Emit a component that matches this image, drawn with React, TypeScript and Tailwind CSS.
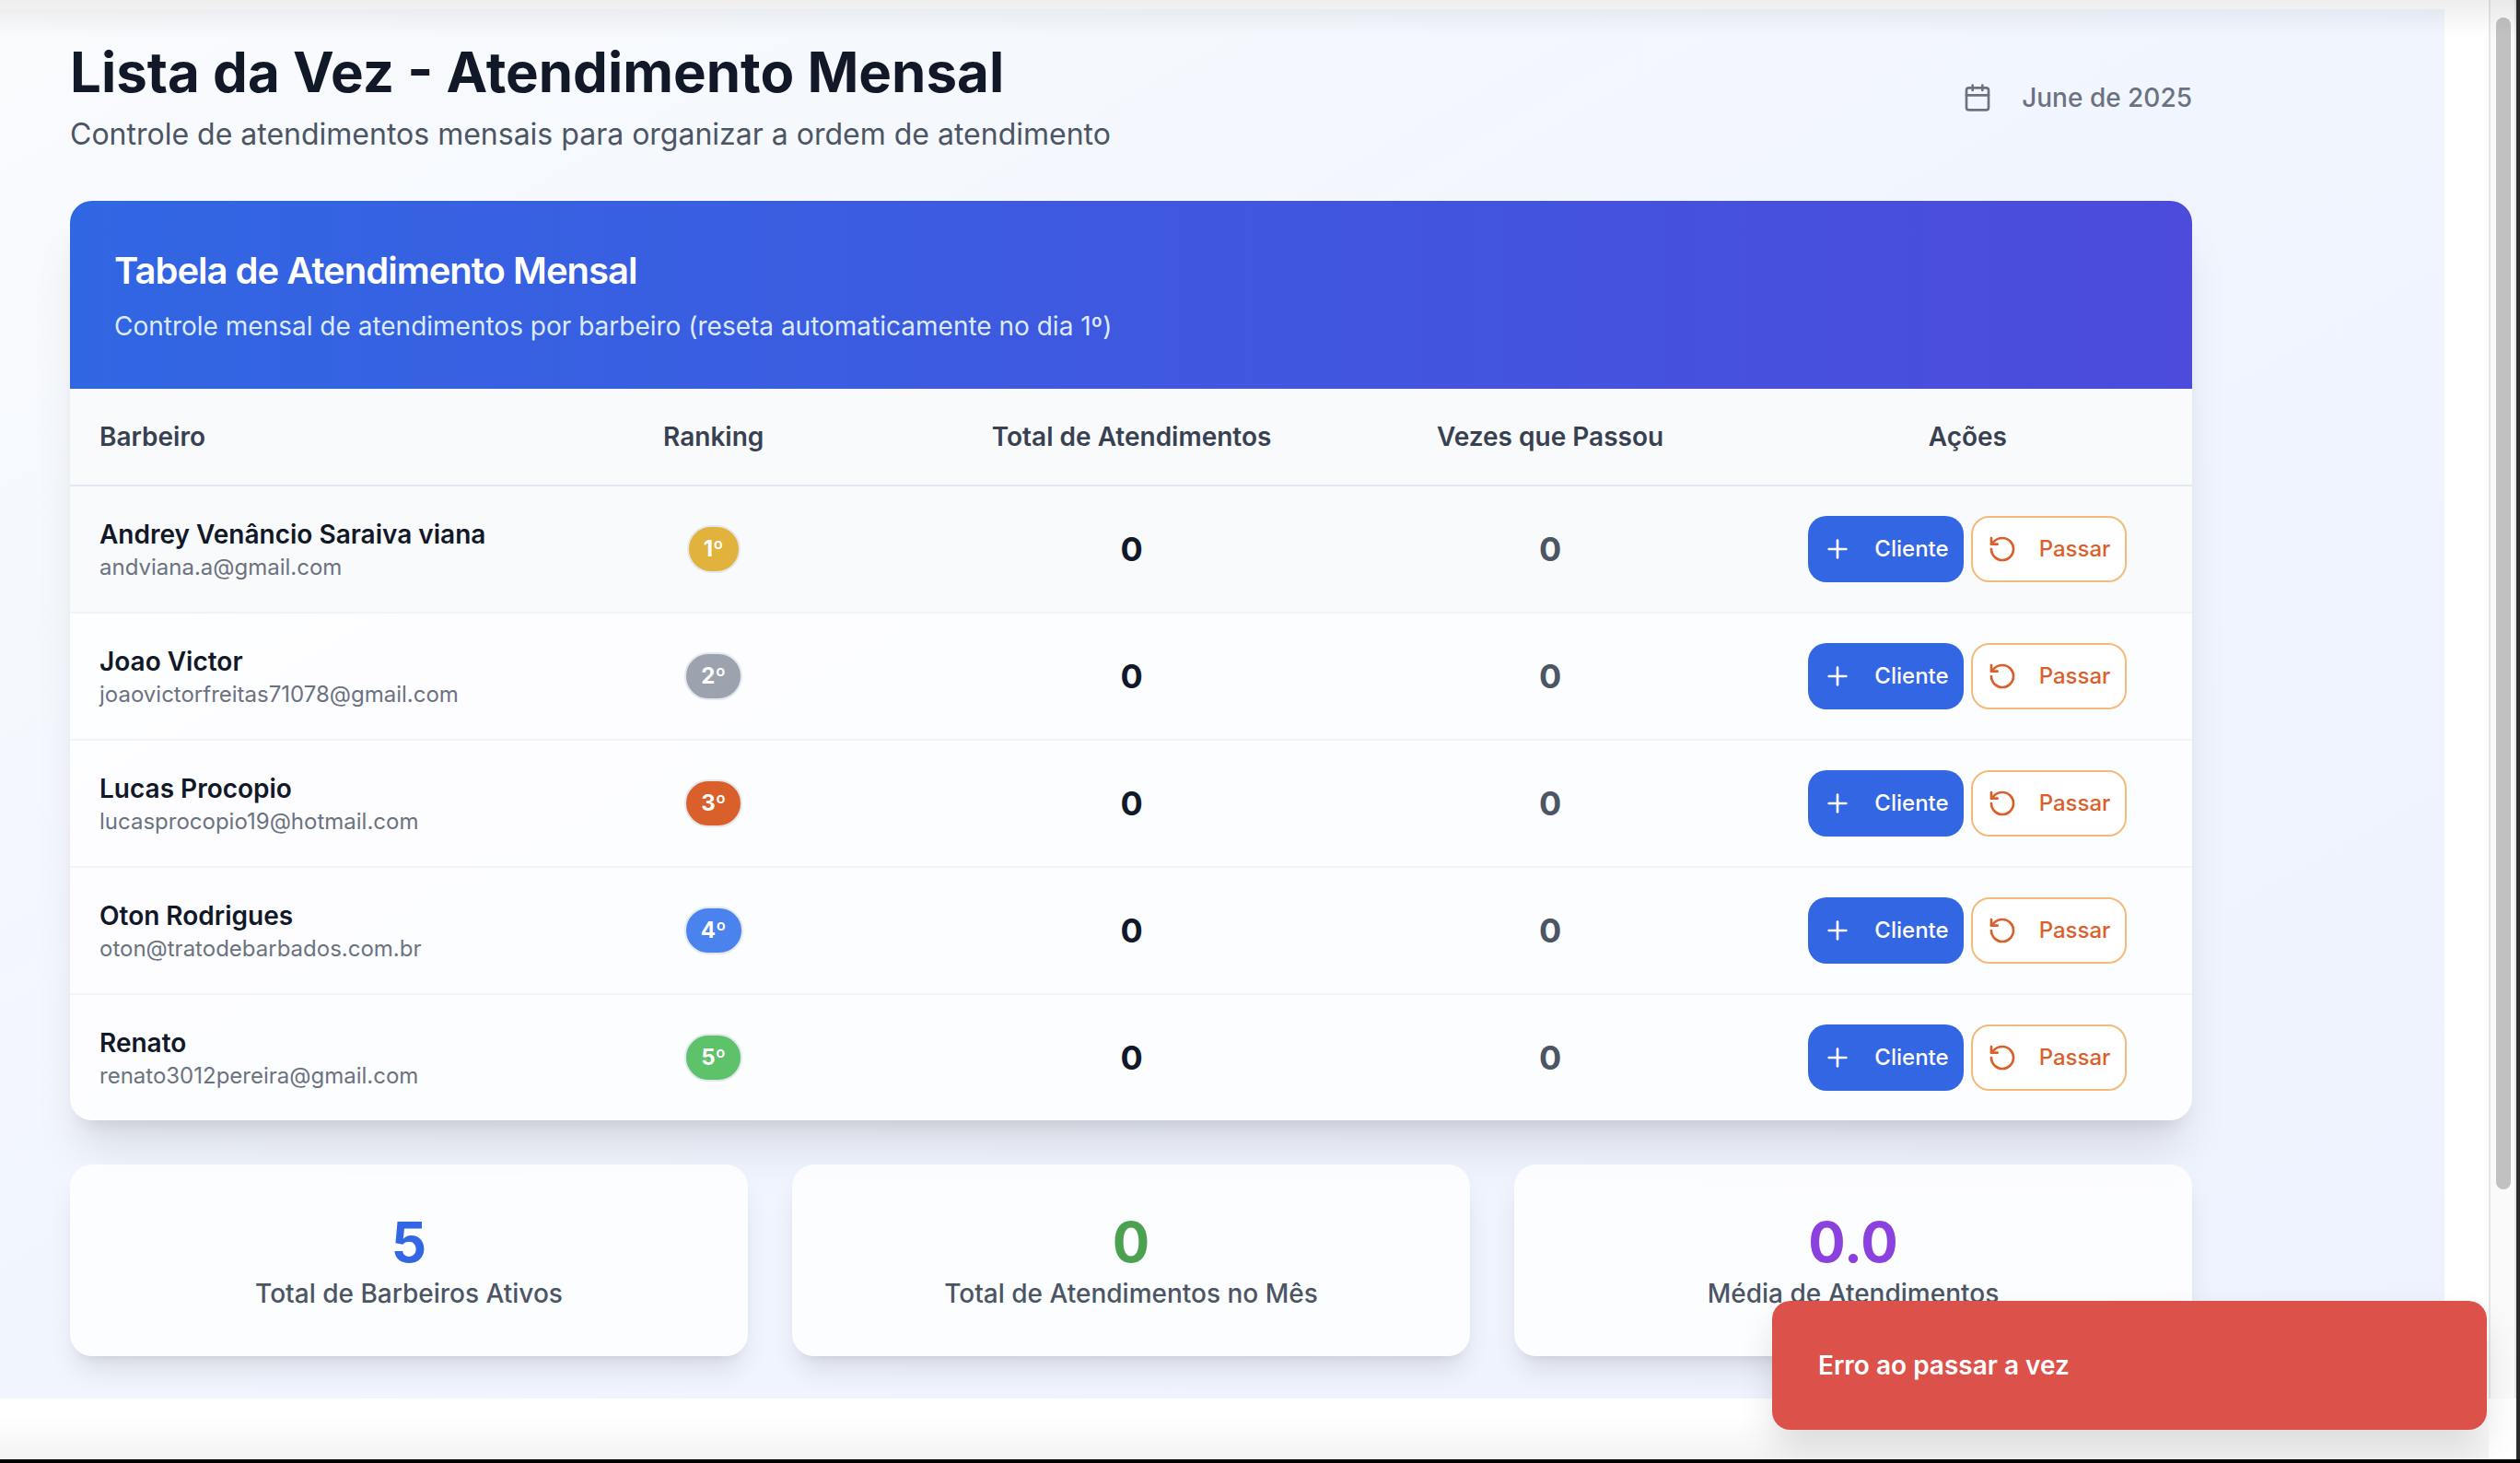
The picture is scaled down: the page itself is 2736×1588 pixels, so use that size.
import { Calendar, Plus, RotateCcw } from "lucide-react";

const barbers = [
  { name: "Andrey Venâncio Saraiva viana", email: "andviana.a@gmail.com", rank: "1º", badge: "bg-[#e1b23c]" },
  { name: "Joao Victor", email: "joaovictorfreitas71078@gmail.com", rank: "2º", badge: "bg-[#9ca3af]" },
  { name: "Lucas Procopio", email: "lucasprocopio19@hotmail.com", rank: "3º", badge: "bg-[#d9602b]" },
  { name: "Oton Rodrigues", email: "oton@tratodebarbados.com.br", rank: "4º", badge: "bg-[#4a82ee]" },
  { name: "Renato", email: "renato3012pereira@gmail.com", rank: "5º", badge: "bg-[#5dc269]" },
];

const stats = [
  { value: "5", label: "Total de Barbeiros Ativos", color: "text-[#3266e3]" },
  { value: "0", label: "Total de Atendimentos no Mês", color: "text-[#4aa14f]" },
  { value: "0.0", label: "Média de Atendimentos", color: "text-[#8a41de]" },
];

function Header() {
  return (
    <header className="flex items-center justify-between">
      <div>
        <h1 className="text-[60px] font-bold leading-[72px] text-[#111827]">Lista da Vez - Atendimento Mensal</h1>
        <p className="mt-2 text-[32px] leading-[48px] text-[#4b5563]">
          Controle de atendimentos mensais para organizar a ordem de atendimento
        </p>
      </div>
      <div className="flex items-center gap-8 text-[28px] font-medium leading-10 text-[#6b7280]">
        <Calendar className="size-8" />
        <span>June de 2025</span>
      </div>
    </header>
  );
}

function ServiceTable() {
  return (
    <section className="overflow-hidden rounded-3xl bg-white/80 shadow-[0_40px_50px_-10px_rgba(0,0,0,0.1),0_16px_20px_-12px_rgba(0,0,0,0.1)]">
      <div className="bg-linear-to-r/srgb from-[#3166e3] to-[#4c4bdb] p-12">
        <h2 className="text-[40px] font-semibold leading-14 tracking-tight text-white">Tabela de Atendimento Mensal</h2>
        <p className="mt-3 text-[28px] leading-10 text-[#dbeafe]">
          Controle mensal de atendimentos por barbeiro (reseta automaticamente no dia 1º)
        </p>
      </div>
      <table className="w-full table-fixed border-separate border-spacing-0">
        <colgroup>
          <col className="w-[21.25%]" />
          <col className="w-[18.15%]" />
          <col className="w-[21.25%]" />
          <col className="w-[18.2%]" />
          <col className="w-[21.15%]" />
        </colgroup>
        <thead>
          <tr className="bg-[#f9fafb] text-[28px] leading-10 text-[#374151] *:border-b-2 *:border-[#e2e8f0] *:py-8 *:font-semibold">
            <th scope="col" className="px-8 text-left">Barbeiro</th>
            <th scope="col">Ranking</th>
            <th scope="col">Total de Atendimentos</th>
            <th scope="col">Vezes que Passou</th>
            <th scope="col">Ações</th>
          </tr>
        </thead>
        <tbody>
          {barbers.map((b) => (
            <tr
              key={b.email}
              className="text-center *:border-b-2 *:border-[#f1f3f6] first:bg-[#f9fafb] last:*:border-b-0"
            >
              <td className="px-8 py-8 text-left">
                <div className="whitespace-nowrap text-[28px] font-semibold leading-10 text-[#111827]">{b.name}</div>
                <div className="text-[24px] leading-8 text-[#6b7280]">{b.email}</div>
              </td>
              <td>
                <span
                  className={`inline-flex rounded-full border-2 border-[#e2e8f0] px-4 py-2 align-middle text-[24px] font-bold leading-8 text-white ${b.badge}`}
                >
                  {b.rank}
                </span>
              </td>
              <td className="text-[36px] font-bold leading-14 text-[#111827]">0</td>
              <td className="text-[36px] font-bold leading-14 text-[#4b5563]">0</td>
              <td>
                <div className="flex items-center justify-center gap-2 text-[24px] font-medium leading-8">
                  <button type="button" className="flex h-18 items-center gap-6 rounded-[20px] bg-[#3266e3] px-4 text-white">
                    <Plus className="size-8" />
                    Cliente
                  </button>
                  <button
                    type="button"
                    className="flex h-18 items-center gap-6 rounded-[20px] border-2 border-[#f4ba7a] bg-white px-4 text-[#d9602b]"
                  >
                    <RotateCcw className="size-8" />
                    Passar
                  </button>
                </div>
              </td>
            </tr>
          ))}
        </tbody>
      </table>
    </section>
  );
}

function Stats() {
  return (
    <section className="grid grid-cols-3 gap-12">
      {stats.map((s) => (
        <div
          key={s.label}
          className="rounded-3xl bg-white/80 p-12 text-center shadow-[0_20px_30px_-6px_rgba(0,0,0,0.1),0_8px_12px_-8px_rgba(0,0,0,0.1)]"
        >
          <div className={`text-[60px] font-bold leading-[72px] ${s.color}`}>{s.value}</div>
          <div className="text-[28px] font-medium leading-10 text-[#4b5563]">{s.label}</div>
        </div>
      ))}
    </section>
  );
}

export default function App() {
  return (
    <div className="relative flex h-screen flex-col overflow-hidden bg-black font-['Inter',sans-serif]">
      <div className="flex min-h-0 flex-1 border-r-4 border-[#2b2b2b] bg-white">
        <div className="flex min-w-0 flex-1 flex-col pt-[10px]">
          <main className="mr-12 flex flex-col gap-12 bg-linear-to-br/srgb from-[#f9fbfd] via-[#f1f5fe] to-[#eef2fe] pb-[46px] pl-19 pr-[274px] pt-8">
            <Header />
            <ServiceTable />
            <Stats />
          </main>
          <div className="flex-1 bg-linear-to-b from-white from-30% to-[#f3f3f3]" />
        </div>
        <div className="mb-[66px] w-[30px] shrink-0 border-x-2 border-[#e6e6e6] bg-[#fafafa] px-[6px] pt-[19px]">
          <div className="h-[1272px] w-4 rounded-full bg-[#c1c1c1]" />
        </div>
      </div>
      <div className="h-1 shrink-0 bg-black" />
      <div className="pointer-events-none absolute inset-x-0 top-0 mr-1 h-10 bg-linear-to-b from-black/7 to-transparent" />
      <div
        role="alert"
        className="absolute bottom-9 right-9 w-[776px] rounded-[20px] bg-[#dc514a] p-[50px] text-[28px] font-semibold leading-10 text-white shadow-[0_20px_40px_-4px_rgba(0,0,0,0.14)]"
      >
        Erro ao passar a vez
      </div>
    </div>
  );
}
